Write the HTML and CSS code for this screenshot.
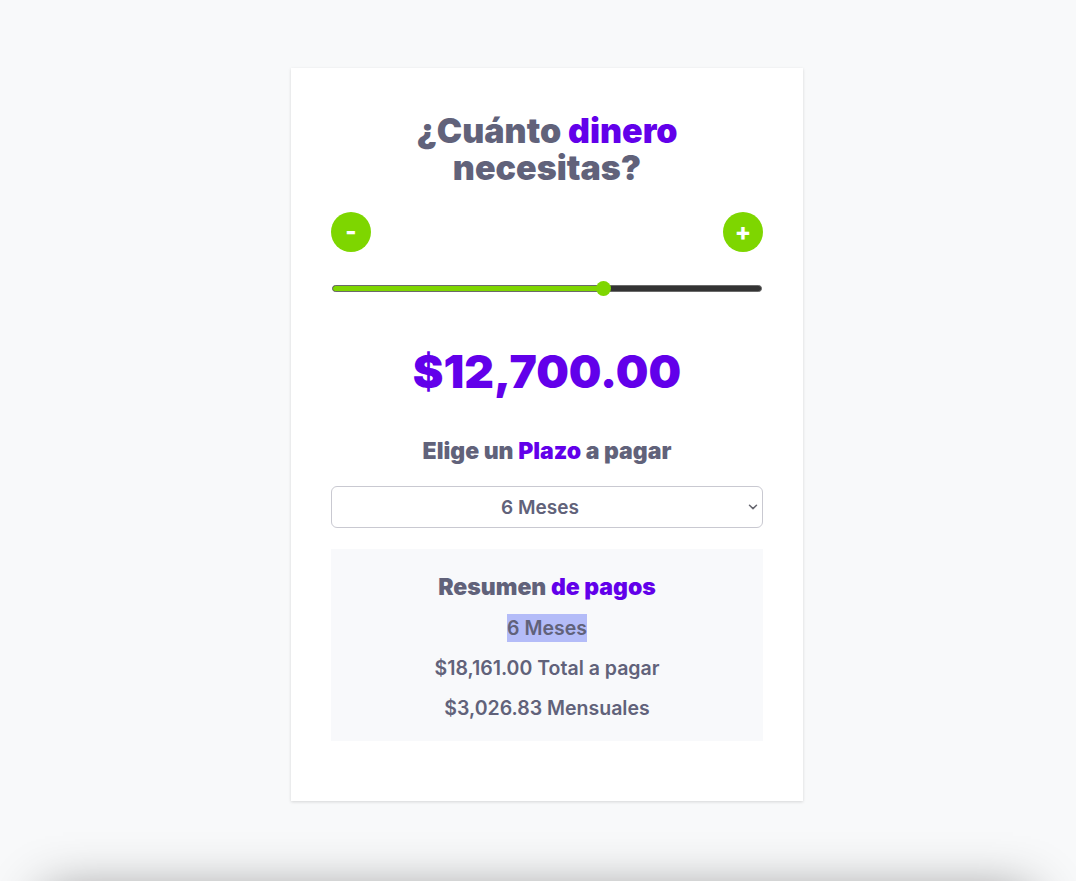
FILE: index.html
```html
<!DOCTYPE html>
<html lang="es">
<head>
<meta charset="utf-8">
<title>Simulador de préstamo</title>
<link rel="stylesheet" href="styles.css">
</head>
<body>
<main class="page">
  <section class="card">
    <h1 class="title">¿Cuánto <span class="accent">dinero</span><br>necesitas?</h1>
    <div class="steppers">
      <button class="step" type="button">-</button>
      <button class="step" type="button">+</button>
    </div>
    <div class="slider">
      <div class="track">
        <div class="fill" style="width: 63%"></div>
      </div>
      <div class="thumb" style="left: 63%"></div>
    </div>
    <div class="amount">$12,700.00</div>
    <h2 class="subtitle">Elige un <span class="accent">Plazo</span> a pagar</h2>
    <div class="select-wrap">
      <select class="select">
        <option>6 Meses</option>
        <option>12 Meses</option>
        <option>18 Meses</option>
      </select>
      <svg class="chev" width="10" height="6" viewBox="0 0 10 6"><path d="M1.5 1.2l3.5 3.4 3.5-3.4" fill="none" stroke="#66666f" stroke-width="1.5" stroke-linecap="round" stroke-linejoin="round"/></svg>
    </div>
    <div class="summary">
      <h3 class="summary-title">Resumen <span class="accent">de pagos</span></h3>
      <p class="line"><span class="hl">6 Meses</span></p>
      <p class="line">$18,161.00 Total a pagar</p>
      <p class="line">$3,026.83 Mensuales</p>
    </div>
  </section>
  <footer class="below"></footer>
</main>
</body>
</html>
```
FILE: styles.css
```css
* { box-sizing: border-box; }
html, body { margin: 0; padding: 0; }
body {
  background: #f8f9fa;
  font-family: Inter, "Noto Sans", sans-serif;
  color: #61627a;
  overflow: hidden;
}
.page {
  display: flex;
  flex-direction: column;
  align-items: center;
  padding-top: 68px;
}
.card {
  width: 512px;
  margin-left: 18px;
  background: #fff;
  box-shadow: 0 1px 3px rgba(0,0,0,0.14);
  padding: 44px 40px 60px;
  display: flex;
  flex-direction: column;
}
.accent { color: #6200ea; }
.title {
  margin: 0;
  text-align: center;
  font-size: 34px;
  line-height: 37px;
  font-weight: 900;
}
.steppers {
  display: flex;
  justify-content: space-between;
  margin-top: 26px;
}
.step {
  width: 40px;
  height: 40px;
  border-radius: 50%;
  border: none;
  background: #7ed600;
  color: #fff;
  font-family: Inter, sans-serif;
  font-size: 24px;
  font-weight: 800;
  line-height: 40px;
  padding: 0;
  display: flex;
  align-items: center;
  justify-content: center;
}
.slider {
  position: relative;
  margin-top: 33px;
  height: 8px;
  padding: 0 1px;
}
.track {
  height: 7px;
  border-radius: 4px;
  background: #333;
  border: 1px solid #6a6a6a;
  overflow: hidden;
}
.fill {
  height: 100%;
  background: #7ed600;
}
.thumb {
  position: absolute;
  top: -4px;
  width: 15px;
  height: 15px;
  margin-left: -7px;
  border-radius: 50%;
  background: #7ed600;
}
.amount {
  margin-top: 50px;
  text-align: center;
  font-size: 46px;
  line-height: 56px;
  font-weight: 900;
  color: #6200ea;
}
.subtitle {
  margin: 37px 0 0;
  text-align: center;
  font-size: 23px;
  line-height: 30px;
  font-weight: 900;
}
.select-wrap {
  position: relative;
  margin-top: 20px;
}
.select {
  display: block;
  width: 100%;
  height: 42px;
  appearance: none;
  -webkit-appearance: none;
  background: #fff;
  border: 1px solid #c9c9d1;
  border-radius: 6px;
  font-family: Inter, sans-serif;
  font-size: 19px;
  font-weight: 600;
  color: #61627a;
  text-align: center;
  text-align-last: center;
  padding: 0 20px 0 6px;
}
.chev {
  position: absolute;
  right: 5px;
  top: 18px;
}
.summary {
  margin-top: 21px;
  background: #f8f9fb;
  padding: 23px 20px 19px;
  text-align: center;
}
.summary-title {
  margin: 0;
  font-size: 23px;
  line-height: 30px;
  font-weight: 900;
}
.line {
  margin: 12px 0 0;
  font-size: 19.5px;
  line-height: 28px;
  font-weight: 600;
}
.hl {
  background: #b4bcf8;
  display: inline-block;
  line-height: 28px;
}
.below {
  margin-top: 92px;
  width: calc(100% - 90px);
  height: 200px;
  background: #f8f9fa;
  box-shadow: 0 0 50px rgba(0,0,0,0.45);
}
```
